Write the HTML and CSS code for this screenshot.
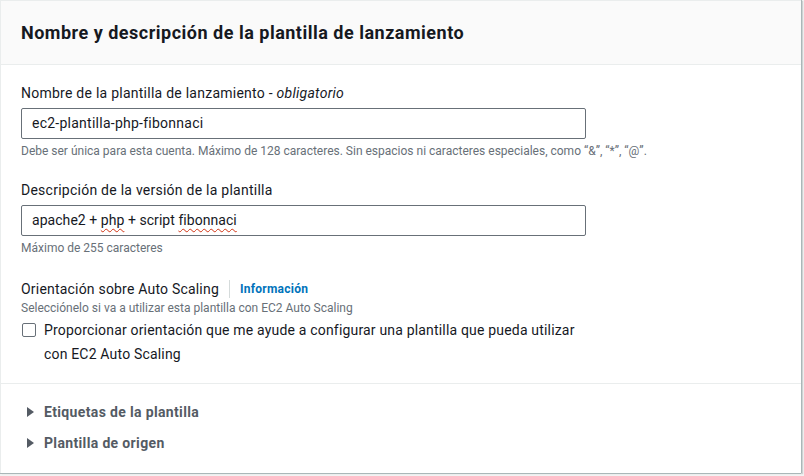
FILE: index.html
```html
<!DOCTYPE html>
<html lang="es">
<head>
<meta charset="utf-8">
<title>Plantilla de lanzamiento</title>
<link rel="stylesheet" href="styles.css">
</head>
<body>
<div class="card">
  <div class="card-header">
    <h2 class="title">Nombre y descripción de la plantilla de lanzamiento</h2>
  </div>
  <div class="card-body">
    <div class="field">
      <label class="label">Nombre de la plantilla de lanzamiento - <i>obligatorio</i></label>
      <div class="input">ec2-plantilla-php-fibonnaci</div>
      <div class="hint">Debe ser única para esta cuenta. Máximo de 128 caracteres. Sin espacios ni caracteres especiales, como “&amp;”, “*”, “@”.</div>
    </div>
    <div class="field second">
      <label class="label">Descripción de la versión de la plantilla</label>
      <div class="input desc-input">apache2 + <span class="spell">php</span> + script <span class="spell">fibonnaci</span></div>
      <div class="hint">Máximo de 255 caracteres</div>
    </div>
    <div class="field last">
      <div class="label-row">
        <span class="label">Orientación sobre Auto Scaling</span>
        <span class="sep"></span>
        <a class="info">Información</a>
      </div>
      <div class="hint desc">Selecciónelo si va a utilizar esta plantilla con EC2 Auto Scaling</div>
      <div class="check-row">
        <span class="checkbox"></span>
        <span class="check-text">Proporcionar orientación que me ayude a configurar una plantilla que pueda utilizar con EC2 Auto Scaling</span>
      </div>
    </div>
  </div>
  <div class="card-footer">
    <div class="expander"><span class="caret"></span>Etiquetas de la plantilla</div>
    <div class="expander"><span class="caret"></span>Plantilla de origen</div>
  </div>
</div>
</body>
</html>
```
FILE: styles.css
```css
html, body {
  margin: 0;
  padding: 0;
  background: #f2f3f3;
}
body {
  font-family: Roboto, "Noto Sans", sans-serif;
  color: #16191f;
  width: 804px;
  height: 476px;
  overflow: hidden;
}
.card {
  width: 801px;
  height: 473px;
  background: #fff;
  box-sizing: border-box;
  border-left: 1px solid #eaeded;
  border-top: 1px solid #eaeded;
  box-shadow: 1px 0 0 #aab7b8, 0 1px 0 #aab7b8, 2px 1px 1px rgba(0,28,36,0.15);
  display: flex;
  flex-direction: column;
}
.card-header {
  background: #fafafa;
  height: 63px;
  border-bottom: 1px solid #eaeded;
  padding: 0 20px;
  display: flex;
  align-items: center;
  flex-shrink: 0;
}
.title {
  margin: 0;
  font-size: 18px;
  font-weight: 700;
  line-height: 22px;
  padding-top: 1px;
  letter-spacing: 0.5px;
}
.card-body {
  padding: 17px 20px 0 20px;
  border-bottom: 1px solid #eaeded;
  height: 319px;
  box-sizing: border-box;
  flex-shrink: 0;
}
.field {
  margin-bottom: 20px;
}
.field.second {
  margin-bottom: 22px;
}
.label {
  display: block;
  font-size: 14px;
  line-height: 22px;
  margin-bottom: 4px;
  letter-spacing: 0.25px;
}
.label i {
  font-style: italic;
}
.input {
  width: 565px;
  height: 31px;
  box-sizing: border-box;
  border: 1px solid #687078;
  border-radius: 2px;
  padding: 0 10px;
  font-size: 14px;
  line-height: 29px;
  color: #16191f;
  letter-spacing: 0.25px;
}
.desc-input {
  letter-spacing: 0.05px;
}
.spell {
  text-decoration: underline wavy #d13212;
  text-decoration-thickness: 1px;
  text-underline-offset: 3px;
}
.hint {
  font-size: 12px;
  line-height: 16px;
  color: #687078;
  margin-top: 4px;
}
.label-row {
  display: flex;
  align-items: center;
  height: 22px;
}
.label-row .label {
  margin: 0;
  letter-spacing: 0.2px;
}
.sep {
  width: 1px;
  height: 18px;
  background: #d5dbdb;
  margin: 0 10px 0 10px;
}
.info {
  font-size: 12px;
  font-weight: 700;
  color: #0073bb;
  letter-spacing: 0.25px;
}
.desc {
  margin-top: 0;
}
.check-row {
  display: flex;
  align-items: flex-start;
  margin-top: 2px;
}
.checkbox {
  width: 14px;
  height: 14px;
  box-sizing: border-box;
  border: 1px solid #687078;
  border-radius: 2px;
  margin: 5px 8px 0 1px;
  flex-shrink: 0;
}
.check-text {
  font-size: 14px;
  line-height: 24px;
  width: 545px;
  letter-spacing: 0.18px;
}
.card-footer {
  padding: 17px 20px 0 20px;
}
.expander {
  display: flex;
  align-items: center;
  font-size: 14px;
  font-weight: 700;
  color: #545b64;
  height: 22px;
  margin-bottom: 9px;
  letter-spacing: 0.35px;
}
.caret {
  width: 0;
  height: 0;
  border-left: 7px solid #545b64;
  border-top: 5px solid transparent;
  border-bottom: 5px solid transparent;
  margin: 0 10px 0 6px;
}
```
